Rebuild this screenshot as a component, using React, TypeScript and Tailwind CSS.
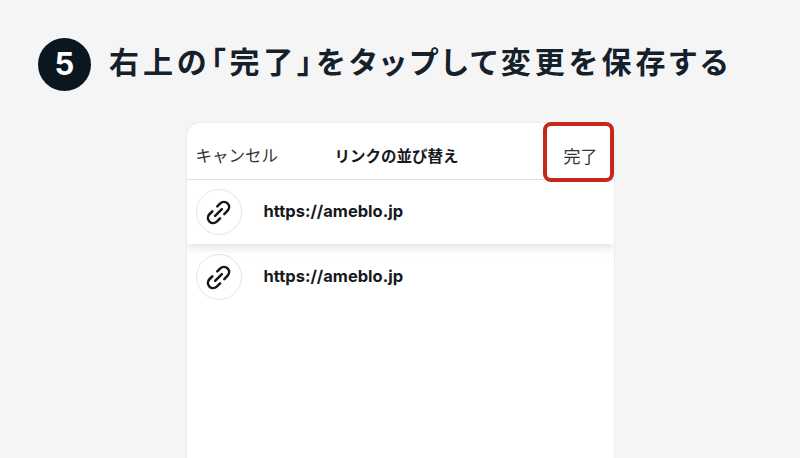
const jp = "font-['Noto_Sans_CJK_JP','Noto_Sans',sans-serif]"

function ChainIcon() {
  return (
    <svg viewBox="0 0 24 24" className="w-[29px] h-[29px] text-[#14181c]" fill="none" stroke="currentColor" strokeWidth={2.1} strokeLinecap="round" strokeLinejoin="round">
      <path d="M11 6.9 13.46 4.46A4.3 4.3 0 0 1 19.54 10.54L16.8 13.3" />
      <path d="M6.9 11 4.46 13.46A4.3 4.3 0 0 0 10.54 19.54L13.3 16.8" />
      <path d="M9.2 14.8 14.8 9.2" />
    </svg>
  )
}

function LinkRow({ raised }: { raised?: boolean }) {
  return (
    <div className={`flex items-center h-[64px] pl-[9px] bg-white ${raised ? 'relative shadow-[0_3px_10px_rgba(0,0,0,0.13)]' : ''}`}>
      <div className="w-[46px] h-[46px] rounded-full border border-[#e4e4e4] flex items-center justify-center shrink-0">
        <ChainIcon />
      </div>
      <span className="ml-[22px] pb-[1px] text-[16.5px] font-bold text-[#16191d] font-['Inter',sans-serif]">https://ameblo.jp</span>
    </div>
  )
}

export default function App() {
  return (
    <div className={`w-[800px] h-[458px] overflow-hidden bg-[#f5f5f5] ${jp}`}>
      <div className="flex items-center h-[122px] pl-[38px] pb-[2px]">
        <div className="w-[53px] h-[53px] mt-[9px] rounded-full bg-[#0a1620] flex items-center justify-center text-white text-[31px] font-bold font-['Inter',sans-serif]">5</div>
        <h1 className="ml-[18px] text-[30px] leading-none font-bold tracking-[3.95px] text-[#14202a] whitespace-nowrap [font-feature-settings:'palt']">右上の「完了」をタップして変更を保存する</h1>
      </div>
      <div className="ml-[185.5px] w-[429px] h-[336px] bg-white rounded-t-[14px] border-x border-t border-[#ebebeb]">
        <div className="relative flex items-center h-[57px] pt-[9px] border-b border-[#e2e2e2]">
          <span className="absolute left-[9px] text-[16.5px] text-[#333333]">キャンセル</span>
          <span className="absolute left-[148px] text-[15.5px] font-bold text-[#16191d]">リンクの並び替え</span>
          <span className="absolute left-[377px] text-[17px] text-[#333333]">完了</span>
          <div className="absolute z-10 left-[356px] top-[-1px] w-[71px] h-[60px] rounded-[8px] border-[4px] border-[#c5281c]" />
        </div>
        <div className="overflow-hidden pb-[12px]">
          <LinkRow raised />
          <div className="pt-[1px]">
            <LinkRow />
          </div>
        </div>
      </div>
    </div>
  )
}
